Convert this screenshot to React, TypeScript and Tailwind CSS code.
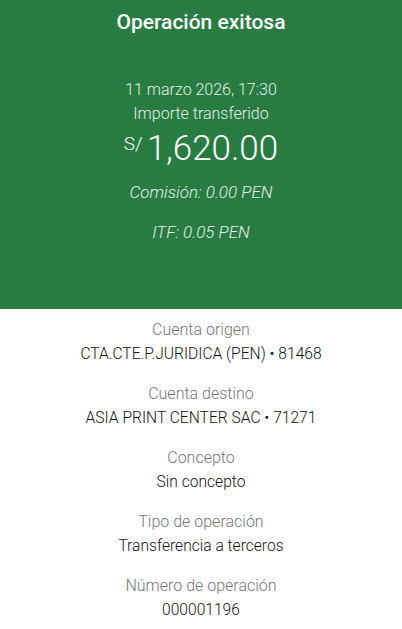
export default function App() {
  const rows = [
    { label: "Cuenta origen", value: "CTA.CTE.P.JURIDICA (PEN) • 81468" },
    { label: "Cuenta destino", value: "ASIA PRINT CENTER SAC • 71271" },
    { label: "Concepto", value: "Sin concepto" },
    { label: "Tipo de operación", value: "Transferencia a terceros" },
    { label: "Número de operación", value: "000001196" },
  ];

  return (
    <div className="w-[402px] h-[629px] overflow-hidden bg-white font-['Roboto',sans-serif]">
      <section className="h-[309px] bg-[#287c42] text-white flex flex-col items-center">
        <h1 className="mt-[8px] text-[21px] leading-[28px] font-medium">Operación exitosa</h1>

        <p className="mt-[42px] text-[16px] leading-[24px] font-light text-[#e6f0e9]">11 marzo 2026, 17:30</p>
        <p className="text-[16px] leading-[24px] font-light text-[#e6f0e9]">Importe transferido</p>

        <div className="mt-[2px] flex items-start">
          <span className="text-[19px] leading-[24px] font-light mt-[4px] mr-[4px]">S/</span>
          <span className="text-[35px] leading-[42px] font-light">1,620.00</span>
        </div>

        <p className="mt-[10px] text-[17px] leading-[24px] font-light italic text-[#e6f0e9]">Comisión: 0.00 PEN</p>
        <p className="mt-[16px] text-[17px] leading-[24px] font-light italic text-[#e6f0e9]">ITF: 0.05 PEN</p>
      </section>

      <section className="flex flex-col items-center pt-[9px]">
        {rows.map((r) => (
          <div key={r.label} className="flex flex-col items-center mb-[16px]">
            <span className="text-[16px] leading-[24px] font-light text-[#767676]">{r.label}</span>
            <span className="text-[15.6px] leading-[24px] font-light text-[#121212]">{r.value}</span>
          </div>
        ))}
      </section>
    </div>
  );
}
